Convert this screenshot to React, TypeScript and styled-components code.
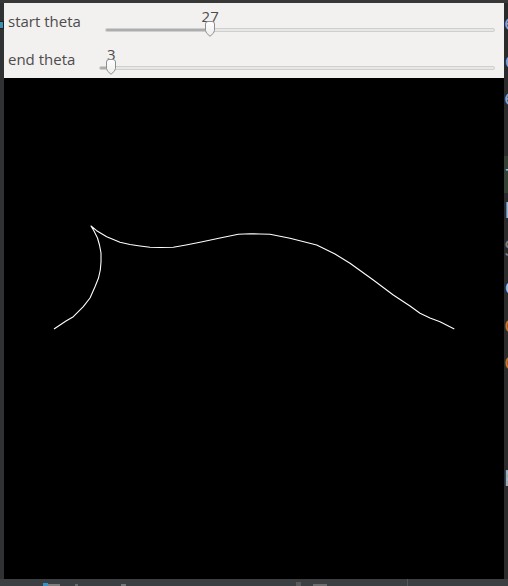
import { FC } from "react";
import styled, { createGlobalStyle } from "styled-components";

const GlobalStyle = createGlobalStyle`
  html, body {
    margin: 0;
    padding: 0;
    background: #2b2b2b;
    overflow: hidden;
  }
`;

type SliderProps = { label: string; value: number; max?: number };

const Slider: FC<SliderProps> = ({ label, value, max = 100 }) => {
  const pct = (value / max) * 100;
  return (
    <Row>
      <Label>{label}</Label>
      <Scale>
        <Track>
          <TrackFill style={{ width: `${pct}%` }} />
        </Track>
        <ValueText style={{ left: `${pct}%` }}>{value}</ValueText>
        <Handle style={{ left: `calc(${pct}% - 6px)` }}>
          <svg width="12" height="16" viewBox="0 0 12 16">
            <defs>
              <linearGradient id="hg" x1="0" y1="0" x2="0" y2="1">
                <stop offset="0" stopColor="#ffffff" />
                <stop offset="1" stopColor="#ededed" />
              </linearGradient>
            </defs>
            <path
              d="M1.5 3 Q1.5 0.5 4 0.5 H8 Q10.5 0.5 10.5 3 V9.5 Q10.5 12 6 15.3 Q1.5 12 1.5 9.5 Z"
              fill="url(#hg)"
              stroke="#8e8e8e"
              strokeWidth="1"
            />
          </svg>
        </Handle>
      </Scale>
    </Row>
  );
};

const curve =
  "54,329 60,325 66,321 73.3,316.7 83.3,306.7 90,298 95,286.7 98.5,278 100.3,270 101,262 101,253 99.5,245 97.5,238 94,231 91,226 " +
  "96.7,230.7 106.7,236.7 120,242.3 130,244.5 140,246 150,247.3 160,247.5 173.3,247.3 186,245 200,242.3 220,238 238.3,234.3 " +
  "250,233.8 260,234 270,234.3 290,238.3 316.7,245 335,254 350,263.3 373.3,280 393.3,295 410,306 420,313.3 430,318 440,321.7 454.3,329";

const editorLines: { ch: string; color: string; bg?: string }[] = [
  { ch: "e", color: "#8aa6d6" },
  { ch: "c", color: "#8aa6d6" },
  { ch: "e", color: "#8aa6d6" },
  { ch: ":", color: "#6a8ad0" },
  { ch: "f", color: "#a9c4e6", bg: "#344134" },
  { ch: "F", color: "#a9b7c6" },
  { ch: "S", color: "#7f7f7f" },
  { ch: "c", color: "#a9c4e6" },
  { ch: "o", color: "#cc7832" },
  { ch: "o", color: "#cc7832" },
  { ch: ":", color: "#6a8ad0" },
  { ch: " ", color: "#a9b7c6" },
  { ch: "p", color: "#a9b7c6" },
];

const App: FC = () => {
  return (
    <>
      <GlobalStyle />
      <Desktop>
        <TopStrip />
        <LeftGutter>
          <Marker />
        </LeftGutter>
        <Window>
          <Controls>
            <Slider label="start theta" value={27} />
            <Slider label="end theta" value={3} />
          </Controls>
          <Canvas>
            <svg width="500" height="501" viewBox="4 78 500 501">
              <polyline
                points={curve}
                fill="none"
                stroke="#ffffff"
                strokeWidth="1.1"
                strokeLinejoin="round"
              />
            </svg>
          </Canvas>
        </Window>
        <EditorPeek>
          {editorLines.map((l, i) => (
            <CodeLine key={i} color={l.color} bg={l.bg}>
              {l.ch}
            </CodeLine>
          ))}
        </EditorPeek>
        <BottomStrip>
          <Bit w={5} ml={43} color="#3592c4" />
          <Bit w={12} ml={0} color="#7d7d7d" h={2} />
          <Bit w={3} ml={15} color="#6a6a6a" h={2} />
          <Bit w={5} ml={43} color="#777777" h={2} />
          <Bit w={5} ml={170} color="#5a5a5a" h={4} />
          <Bit w={14} ml={12} color="#6d6d6d" h={2} />
          <Divider />
        </BottomStrip>
      </Desktop>
    </>
  );
};

const Desktop = styled.div`
  display: grid;
  grid-template-columns: 4px 500px 4px;
  grid-template-rows: 3px 576px 7px;
  width: 508px;
  height: 586px;
  background: #2b2b2b;
`;

const TopStrip = styled.div`
  grid-column: 1 / 4;
  background: #383838;
`;

const LeftGutter = styled.div`
  background: #2f3133;
  padding-top: 18px;
`;

const Marker = styled.div`
  width: 3px;
  height: 6px;
  background: #3a8fb0;
  border: 1px solid #1d1d1d;
  border-left: none;
`;

const Window = styled.div`
  display: flex;
  flex-direction: column;
  overflow: hidden;
`;

const Controls = styled.div`
  height: 75px;
  box-sizing: border-box;
  padding: 6px 9px 0 4px;
  background: #f2f1f0;
  overflow: hidden;
  display: flex;
  flex-direction: column;
`;

const Row = styled.div`
  display: flex;
  align-items: flex-start;
  gap: 24px;
  height: 38px;
  flex: none;
`;

const Label = styled.span`
  margin-top: 2px;
  font-family: "Open Sans", "DejaVu Sans", sans-serif;
  font-size: 15px;
  line-height: 20px;
  color: #4c4c4c;
  white-space: nowrap;
`;

const Scale = styled.div`
  position: relative;
  flex: 1;
  height: 38px;
`;

const Track = styled.div`
  margin-top: 19px;
  height: 4px;
  box-sizing: border-box;
  border: 1px solid #cfcfcf;
  border-radius: 2px;
  background: #e7e7e6;
  overflow: hidden;
`;

const TrackFill = styled.div`
  height: 100%;
  background: #adadad;
`;

const ValueText = styled.span`
  position: absolute;
  top: -3px;
  transform: translateX(-50%);
  font-family: "Open Sans", "DejaVu Sans", sans-serif;
  font-size: 15px;
  line-height: 20px;
  color: #4c4c4c;
`;

const Handle = styled.div`
  position: absolute;
  top: 12px;
  width: 12px;
  height: 16px;
  svg {
    display: block;
  }
`;

const Canvas = styled.div`
  flex: 1;
  background: #000000;
  svg {
    display: block;
  }
`;

const EditorPeek = styled.div`
  background: #2b2b2b;
  overflow: hidden;
  padding-top: 2px;
`;

const CodeLine = styled.div<{ color: string; bg?: string }>`
  height: 37.7px;
  font-family: "DejaVu Sans Mono", monospace;
  font-size: 21px;
  line-height: 37.7px;
  color: ${({ color }) => color};
  background: ${({ bg }) => bg ?? "transparent"};
  white-space: pre;
`;

const BottomStrip = styled.div`
  grid-column: 1 / 4;
  display: flex;
  align-items: flex-end;
  background: #3c3f41;
`;

const Bit = styled.div<{ w: number; ml: number; color: string; h?: number }>`
  width: ${({ w }) => w}px;
  height: ${({ h }) => h ?? 3}px;
  margin-left: ${({ ml }) => ml}px;
  background: ${({ color }) => color};
`;

const Divider = styled.div`
  margin-left: 80px;
  width: 1px;
  height: 7px;
  background: #555555;
  flex: none;
`;

export default App;
